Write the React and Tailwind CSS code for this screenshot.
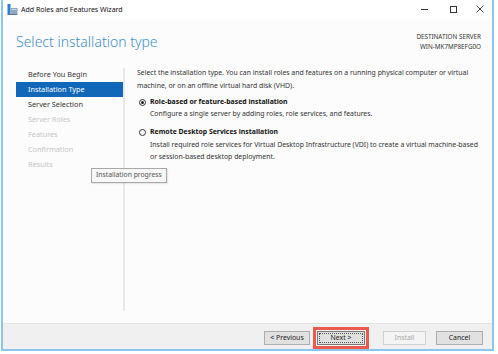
import React from 'react';

const navItems = [
  { label: 'Before You Begin', state: 'done' },
  { label: 'Installation Type', state: 'current' },
  { label: 'Server Selection', state: 'done' },
  { label: 'Server Roles', state: 'off' },
  { label: 'Features', state: 'off' },
  { label: 'Confirmation', state: 'off' },
  { label: 'Results', state: 'off' },
];

function WizardIcon() {
  return (
    <svg width="11" height="11" viewBox="0 0 11 11">
      <rect x="0.5" y="0" width="3" height="10" fill="#2b7fd0" />
      <rect x="3.5" y="4" width="7" height="6" fill="#8fa7bd" />
      <rect x="4.5" y="5" width="5" height="1" fill="#c9d7e4" />
      <rect x="0.5" y="10" width="10" height="1" fill="#5c7a96" />
    </svg>
  );
}

function Radio({ checked }) {
  return (
    <span className="w-[7px] h-[7px] rounded-full border border-[#333] bg-white flex items-center justify-center shrink-0">
      {checked && <span className="w-[3px] h-[3px] rounded-full bg-[#222]" />}
    </span>
  );
}

export default function App() {
  return (
    <div className="w-[498px] h-[354px] bg-white overflow-hidden text-[#222]" style={{ fontFamily: '"Noto Sans", "Open Sans", sans-serif' }}>
      <div className="ml-[1px] w-[493px] h-[351px] border-l-2 border-r-2 border-b-2 border-[#8cc6ef] flex flex-col bg-white">
        {/* title bar */}
        <div className="h-[18px] flex items-center bg-white relative">
          <div className="pl-[4px] pr-[3px] flex items-center"><WizardIcon /></div>
          <span className="text-[7px] text-[#111] leading-none">Add Roles and Features Wizard</span>
          <div className="ml-auto flex items-center h-full text-[#222]">
            <div className="w-[29px] flex justify-center"><span className="block w-[7px] h-px bg-[#333]" /></div>
            <div className="w-[29px] flex justify-center"><span className="block w-[7px] h-[7px] border border-[#333]" /></div>
            <div className="w-[24px] flex justify-center">
              <svg width="8" height="8" viewBox="0 0 8 8"><path d="M0.5 0.5 L7.5 7.5 M7.5 0.5 L0.5 7.5" stroke="#333" strokeWidth="0.9" /></svg>
            </div>
          </div>
        </div>

        {/* main */}
        <div className="h-[305px] bg-[#fcfcfc] flex flex-col relative">
          <div className="h-[49px] flex items-start justify-between pl-[13px] pr-[11px]">
            <h1 className="mt-[13px] text-[14px] font-light text-[#4190c8] leading-[22px]">Select installation type</h1>
            <div className="mt-[14px] text-right text-[6.3px] leading-[10px] text-[#333]">
              <div>DESTINATION SERVER</div>
              <div>WIN-MK7MP8EFG0O</div>
            </div>
          </div>

          <div className="flex flex-1">
            <div className="w-[120px] pl-[13px]">
              {navItems.map((item) => (
                <div
                  key={item.label}
                  className={
                    'h-[15px] flex items-center pl-[12px] text-[7.3px] ' +
                    (item.state === 'current'
                      ? 'bg-[#1168b8] text-white'
                      : item.state === 'done'
                      ? 'text-[#333]'
                      : 'text-[#c6c6c6]')
                  }
                >
                  {item.label}
                </div>
              ))}
            </div>
            <div className="w-[2px] mt-[1px] mb-[12px] bg-[#e8e8e8]" />
            <div className="flex-1 pl-[12px] pr-[14px] text-[6.9px] leading-[12.5px] text-[#333]">
              <p>Select the installation type. You can install roles and features on a running physical computer or virtual machine, or on an offline virtual hard disk (VHD).</p>
              <div className="mt-[4px] ml-[2px]">
                <div className="flex items-center gap-[4px] h-[12px]">
                  <Radio checked />
                  <span className="font-bold text-[#111]">Role-based or feature-based installation</span>
                </div>
                <p className="pl-[11px]">Configure a single server by adding roles, role services, and features.</p>
                <div className="mt-[6px] flex items-center gap-[4px] h-[12px]">
                  <Radio />
                  <span className="font-bold text-[#111]">Remote Desktop Services installation</span>
                </div>
                <p className="pl-[11px]">Install required role services for Virtual Desktop Infrastructure (VDI) to create a virtual machine-based or session-based desktop deployment.</p>
              </div>
            </div>
          </div>

          {/* tooltip */}
          <div className="absolute left-[88px] top-[150px] h-[15px] px-[4px] flex items-center border border-[#a8a8a8] bg-[#f7f7f7] text-[6.8px] text-[#555] shadow-[1px_1px_1px_rgba(0,0,0,0.08)]">
            Installation progress
          </div>
        </div>

        {/* footer */}
        <div className="flex-1 bg-[#f0f0f0] border-t border-[#e4e4e4] flex items-start justify-end pr-[9px] pt-[7px] text-[6.9px]">
          <button className="w-[46px] h-[14px] bg-[#e1e1e1] border border-[#adadad] text-[#222] leading-none">&lt; Previous</button>
          <button className="ml-[7px] w-[48px] h-[14px] bg-[#e1e1e1] border border-[#7a7a7a] text-[#222] leading-none outline-[3px] outline-solid outline-[#ec5a4d] outline-offset-[1px] p-[1px]">
            <span className="w-full h-full flex items-center justify-center border border-dotted border-[#555]">Next &gt;</span>
          </button>
          <button className="ml-[18px] w-[43px] h-[14px] bg-[#f4f4f4] border border-[#d0d0d0] text-[#a8a8a8] leading-none">Install</button>
          <button className="ml-[10px] w-[47px] h-[14px] bg-[#e1e1e1] border border-[#adadad] text-[#222] leading-none">Cancel</button>
        </div>
      </div>
    </div>
  );
}
